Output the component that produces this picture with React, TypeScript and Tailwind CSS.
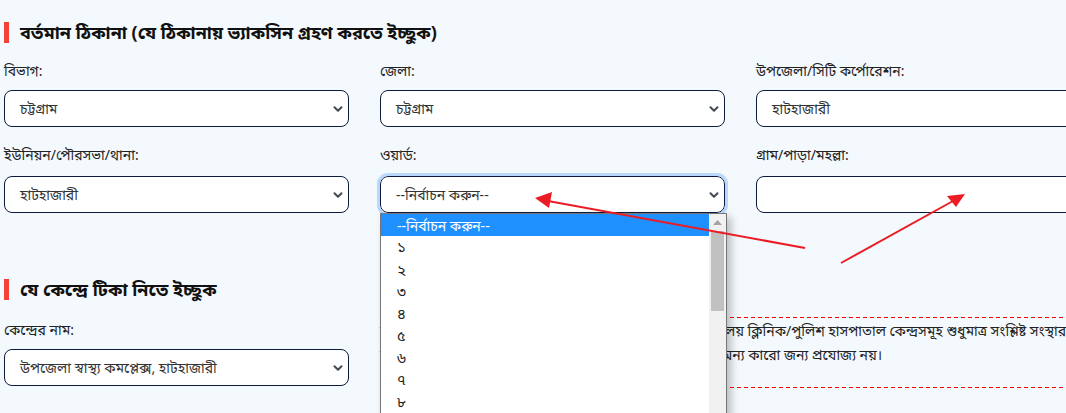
import React from "react";

const Chevron = () => (
  <svg width="10" height="6" viewBox="0 0 10 6" className="shrink-0">
    <path d="M1.5 1.2l3.5 3.5 3.5-3.5" fill="none" stroke="#444b55" strokeWidth="2" strokeLinecap="round" strokeLinejoin="round" />
  </svg>
);

const SelectBox = ({ value, focus = false }: { value: string; focus?: boolean }) => (
  <div
    className={
      "flex h-[37px] items-center justify-between rounded-[8px] border border-[#0d1b3e] bg-white pl-[15px] pr-[5px] text-[14px] text-[#333] " +
      (focus ? "outline outline-[3px] outline-[#b9d8fb]" : "")
    }
  >
    <span>{value}</span>
    <Chevron />
  </div>
);

const InputBox = ({ value }: { value: string }) => (
  <div className="flex h-[37px] items-center rounded-[8px] border border-[#0d1b3e] bg-white pl-[15px] text-[14px] text-[#333]">
    <span>{value}</span>
  </div>
);

const Field = ({ label, children, tall = false }: { label: string; children: React.ReactNode; tall?: boolean }) => (
  <div className="flex flex-col">
    <div className={(tall ? "mb-[12px] " : "mb-[10px] ") + "h-[18px] text-[14px] leading-[18px] text-[#222]"}>{label}</div>
    {children}
  </div>
);

const Heading = ({ children }: { children: React.ReactNode }) => (
  <div className="flex items-center">
    <div className="h-[21px] w-[5px] bg-[#f44336]" />
    <div className="ml-[11px] text-[18px] font-bold leading-[24px] text-[#111]">{children}</div>
  </div>
);

const DashLine = () => (
  <div className="h-px bg-[repeating-linear-gradient(90deg,#ff0000_0px,#ff0000_4px,transparent_4px,transparent_7px)]" />
);

const options = ["১", "২", "৩", "৪", "৫", "৬", "৭", "৮", "৯"];

export default function App() {
  return (
    <div
      className="relative h-[413px] w-[1066px] overflow-hidden bg-[#f4f9fe]"
      style={{ fontFamily: '"Noto Sans", "Noto Sans Bengali", sans-serif' }}
    >
      <div className="w-[1110px] px-[4px] pt-[20px]">
        <Heading>বর্তমান ঠিকানা (যে ঠিকানায় ভ্যাকসিন গ্রহণ করতে ইচ্ছুক)</Heading>
        <div className="mt-[18px] grid grid-cols-[345px_345px_345px] gap-x-[31px] gap-y-[19px]">
          <Field label="বিভাগ:">
            <SelectBox value="চট্টগ্রাম" />
          </Field>
          <Field label="জেলা:">
            <SelectBox value="চট্টগ্রাম" />
          </Field>
          <Field label="উপজেলা/সিটি কর্পোরেশন:">
            <InputBox value="হাটহাজারী" />
          </Field>
          <Field label="ইউনিয়ন/পৌরসভা/থানা:" tall>
            <SelectBox value="হাটহাজারী" />
          </Field>
          <Field label="ওয়ার্ড:" tall>
            <div className="relative">
              <SelectBox value="--নির্বাচন করুন--" focus />
              <div className="absolute left-0 top-[37px] z-10 flex h-[260px] w-[347px] border border-[#767676] bg-white shadow-[4px_4px_8px_rgba(0,0,0,0.25)]">
                <div className="flex-1">
                  <div className="flex h-[22px] items-center bg-[#1e90ff] pl-[16px] text-[14px] text-white">--নির্বাচন করুন--</div>
                  {options.map((o) => (
                    <div key={o} className="flex h-[22px] items-center pl-[16px] text-[15px] text-[#222]">
                      {o}
                    </div>
                  ))}
                </div>
                <div className="flex w-[17px] flex-col bg-[#f1f1f1]">
                  <div className="flex h-[17px] items-center justify-center">
                    <svg width="9" height="5" viewBox="0 0 9 5">
                      <path d="M0 5L4.5 0 9 5z" fill="#a3a3a3" />
                    </svg>
                  </div>
                  <div className="mx-[2px] h-[80px] bg-[#c1c1c1]" />
                </div>
              </div>
            </div>
          </Field>
          <Field label="গ্রাম/পাড়া/মহল্লা:" tall>
            <InputBox value="" />
          </Field>
        </div>

        <div className="mt-[64px]">
          <Heading>যে কেন্দ্রে টিকা নিতে ইচ্ছুক</Heading>
        </div>
        <div className="mt-[20px] grid grid-cols-[345px_722px] gap-x-[31px]">
          <Field label="কেন্দ্রের নাম:">
            <SelectBox value="উপজেলা স্বাস্থ্য কমপ্লেক্স, হাটহাজারী" />
          </Field>
          <div className="mt-[-4px] flex h-[71px] flex-col text-[14px] leading-[24px] text-[#222]">
            <DashLine />
            <div className="flex-1 pt-[1px]">
              <div className="whitespace-nowrap">সম্মিলিত সামরিক হাসপাতাল (সিএমএইচ)/বিভিন্ন সরকারি মন্ত্রণালয় ক্লিনিক/পুলিশ হাসপাতাল কেন্দ্রসমূহ শুধুমাত্র সংশ্লিষ্ট সংস্থার সদস্যদের জন্য প্রযোজ্য,</div>
              <div className="whitespace-nowrap">সংস্থার সদস্য ও তাদের পরিবারের সব সদস্যদের জন্য প্রযোজ্য। অন্য কারো জন্য প্রযোজ্য নয়।</div>
            </div>
            <DashLine />
          </div>
        </div>
      </div>

      <svg className="pointer-events-none absolute left-0 top-0 z-20" width="1066" height="413">
        <line x1="805" y1="248" x2="548" y2="201" stroke="#ec1c24" strokeWidth="2" />
        <path d="M535 198 L552 192 L549 208 Z" fill="#ec1c24" />
        <line x1="841" y1="263" x2="953" y2="201" stroke="#ec1c24" strokeWidth="2" />
        <path d="M965 194 L947 196 L956 207 Z" fill="#ec1c24" />
      </svg>
    </div>
  );
}
